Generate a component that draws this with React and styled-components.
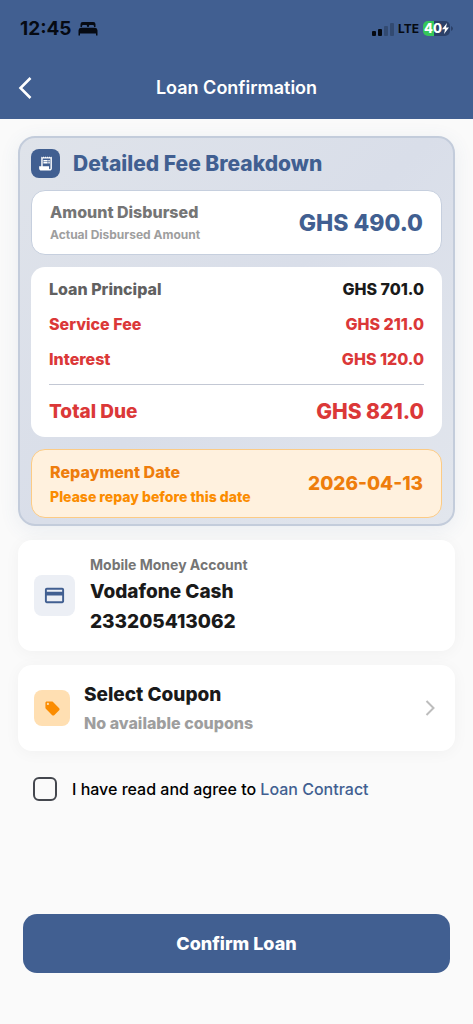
import React, { useState } from "react";
import styled, { createGlobalStyle } from "styled-components";
import { MdReceiptLong, MdCreditCard, MdLocalOffer } from "react-icons/md";

const GlobalStyle = createGlobalStyle`
  *, *::before, *::after { box-sizing: border-box; }
  body {
    margin: 0;
    background: #fafafa;
    font-family: Inter, "Liberation Sans", sans-serif;
    color: #1a1a1a;
  }
  h1, h2, p, dl, dt, dd { margin: 0; }
  button { font-family: inherit; cursor: pointer; }
  svg { display: block; flex: none; }
`;

const colors = {
  primary: "#415f91",
  red: "#db3838",
  orange: "#ee7d0c",
  amber: "#fb8c00",
  dark: "#1a1a1a",
  grey: "#757575",
};

const Page = styled.div`
  min-height: 100vh;
  display: flex;
  flex-direction: column;
`;

const TopBar = styled.header`
  background: ${colors.primary};
`;

const StatusBar = styled.div`
  display: flex;
  align-items: center;
  justify-content: space-between;
  height: 57px;
  padding: 0 20px;
  color: #060a12;
`;

const StatusGroup = styled.div`
  display: flex;
  align-items: center;
  gap: ${(p) => p.$gap}px;
`;

const Clock = styled.time`
  font-size: 19px;
  line-height: 20px;
  font-weight: 700;
`;

const Network = styled.span`
  font-size: 12px;
  line-height: 16px;
  font-weight: 700;
`;

const Battery = styled.span`
  display: flex;
  align-items: center;
  justify-content: center;
  width: 27px;
  height: 15px;
  border-radius: 5px;
  background: linear-gradient(90deg, #35c759 0 42%, #2b4068 42%);
  color: #fff;
  font-size: 13px;
  line-height: 15px;
  font-weight: 800;
`;

const NavBar = styled.nav`
  display: grid;
  grid-template-columns: 48px 1fr 48px;
  align-items: center;
  height: 62px;
`;

const BackButton = styled.button`
  display: flex;
  align-items: center;
  height: 48px;
  padding: 0 18px;
  border: 0;
  background: none;
  color: #fff;
`;

const Title = styled.h1`
  text-align: center;
  font-size: 18px;
  line-height: 24px;
  font-weight: 600;
  color: #fff;
`;

const Content = styled.main`
  flex: 1;
  display: flex;
  flex-direction: column;
  gap: 14px;
  padding: 17px 18px 24px;
`;

const FeePanel = styled.section`
  display: flex;
  flex-direction: column;
  gap: 12px;
  padding: 11px 11px 6px;
  border: 2px solid #c3ccdb;
  border-radius: 17px;
  background: linear-gradient(135deg, #dfe3ea, #d9dee9 50%, #e2e6ed);
  box-shadow: 0 4px 20px rgba(65, 95, 145, 0.09);
`;

const PanelHeading = styled.div`
  display: flex;
  align-items: center;
  gap: 13px;
`;

const PanelTitle = styled.h2`
  font-size: 21px;
  line-height: 24px;
  font-weight: 800;
  color: ${colors.primary};
`;

const IconTile = styled.span`
  display: flex;
  flex: none;
  align-items: center;
  justify-content: center;
  width: ${(p) => p.$size}px;
  height: ${(p) => p.$size}px;
  border-radius: 8px;
  background: ${(p) => p.$bg};
  color: ${(p) => p.$color};
`;

const SummaryCard = styled.div`
  display: flex;
  align-items: center;
  justify-content: space-between;
  padding: 11px 18px;
  border: 1px solid ${(p) => (p.$warm ? "#fccb85" : "#c6cfde")};
  border-radius: 14px;
  background: ${(p) => (p.$warm ? "#fff1de" : "#fff")};
`;

const TextStack = styled.div`
  display: flex;
  flex-direction: column;
  gap: ${(p) => p.$gap || 0}px;
`;

const Text = styled.p`
  font-size: ${(p) => p.$size}px;
  line-height: ${(p) => p.$line}px;
  font-weight: ${(p) => p.$weight || 800};
  color: ${(p) => p.$color || colors.dark};
`;

const FeeCard = styled.dl`
  display: flex;
  flex-direction: column;
  gap: 15px;
  padding: 12px 18px;
  border-radius: 14px;
  background: #fff;
`;

const FeeRow = styled.div`
  display: flex;
  align-items: center;
  justify-content: space-between;
  font-size: 16px;
  line-height: 20px;
  font-weight: 800;
  color: ${(p) => p.$color};
`;

const FeeValue = styled.dd`
  color: ${(p) => p.$color || "inherit"};
`;

const TotalRow = styled.div`
  display: flex;
  align-items: center;
  justify-content: space-between;
  padding-top: 14px;
  border-top: 1px solid #c3c8d4;
  font-size: 19px;
  line-height: 26px;
  font-weight: 800;
  color: ${colors.red};
`;

const TotalValue = styled.dd`
  font-size: 21px;
`;

const AccountCard = styled.section`
  display: flex;
  align-items: center;
  gap: 15px;
  padding: 15px 16px 16px;
  border-radius: 14px;
  background: #fff;
  box-shadow: 0 2px 16px rgba(0, 0, 0, 0.04);
`;

const CouponCard = styled.button`
  display: flex;
  align-items: center;
  gap: 14px;
  width: 100%;
  padding: 17px 20px 17px 16px;
  border: 0;
  border-radius: 14px;
  background: #fff;
  box-shadow: 0 2px 16px rgba(0, 0, 0, 0.04);
  text-align: left;
`;

const CouponText = styled.span`
  flex: 1;
  display: flex;
  flex-direction: column;
  gap: 4px;
`;

const Agreement = styled.div`
  display: flex;
  align-items: center;
  gap: 15px;
  padding: 12px 15px;
  font-size: 16px;
  line-height: 24px;
  font-weight: 500;
  color: #000;
`;

const Checkbox = styled.input`
  appearance: none;
  flex: none;
  width: 24px;
  height: 24px;
  margin: 0;
  border: 2px solid #44474e;
  border-radius: 6px;
  &:checked { background: ${colors.primary}; }
`;

const ContractLink = styled.a`
  color: ${colors.primary};
  text-decoration: none;
`;

const Footer = styled.footer`
  padding: 0 23px 51px;
`;

const ConfirmButton = styled.button`
  display: block;
  width: 100%;
  height: 59px;
  border: 0;
  border-radius: 14px;
  background: ${colors.primary};
  color: #fff;
  font-size: 18px;
  line-height: 24px;
  font-weight: 800;
`;

const BedIcon = () => (
  <svg width="20" height="14" viewBox="0 0 20 14" fill="currentColor" aria-hidden="true">
    <path d="M2.5 5V2.2Q2.500 0 4.700 0H15.300Q17.500 0 17.500 2.200V5H16V4.200Q16 3 14.800 3H12Q10.800 3 10.800 4.200V5H9.200V4.200Q9.200 3 8 3H5.200Q4 3 4 4.200V5Z" />
    <path d="M3 5.700H17Q19.500 6 19.500 8.500V13.500H18V11.500H2V13.500H.5V8.500Q.5 6 3 5.700Z" />
  </svg>
);

const SignalIcon = () => (
  <svg width="22" height="14" viewBox="0 0 22 14" fill="currentColor" aria-hidden="true">
    <rect x="0" y="9" width="4" height="5" rx="1" />
    <rect x="6" y="7" width="4" height="7" rx="1" />
    <rect x="12" y="4" width="4" height="10" rx="1" opacity=".25" />
    <rect x="18" y="1" width="4" height="13" rx="1" opacity=".25" />
  </svg>
);

const BoltIcon = () => (
  <svg width="7" height="11" viewBox="0 0 7 11" fill="currentColor" aria-hidden="true">
    <path d="M5 0L0 6.200H3L2 11L7 4.600H4Z" />
  </svg>
);

const BatteryCap = () => (
  <svg width="2" height="5" viewBox="0 0 2 5" fill="#2b4068" aria-hidden="true">
    <path d="M0 0Q2 1 2 2.500T0 5Z" />
  </svg>
);

const BackIcon = () => (
  <svg width="14" height="22" viewBox="0 0 14 22" fill="none" stroke="currentColor" strokeWidth="2.600" aria-hidden="true">
    <path d="M12.500 1L2.500 11L12.500 21" />
  </svg>
);

const ChevronIcon = () => (
  <svg width="10" height="16" viewBox="0 0 10 16" fill="none" stroke="#bdbdbd" strokeWidth="2" aria-hidden="true">
    <path d="M1.500 1L8.500 8L1.500 15" />
  </svg>
);

const fees = [
  { label: "Loan Principal", value: "GHS 701.0", color: "#616161", valueColor: colors.dark },
  { label: "Service Fee", value: "GHS 211.0", color: colors.red },
  { label: "Interest", value: "GHS 120.0", color: colors.red },
];

export default function App() {
  const [agreed, setAgreed] = useState(false);

  return (
    <>
      <GlobalStyle />
      <Page>
        <TopBar>
          <StatusBar>
            <StatusGroup $gap={6}>
              <Clock>12:45</Clock>
              <BedIcon />
            </StatusGroup>
            <StatusGroup $gap={4}>
              <SignalIcon />
              <Network>LTE</Network>
              <StatusGroup $gap={1}>
                <Battery>40<BoltIcon /></Battery>
                <BatteryCap />
              </StatusGroup>
            </StatusGroup>
          </StatusBar>
          <NavBar>
            <BackButton type="button" aria-label="Back"><BackIcon /></BackButton>
            <Title>Loan Confirmation</Title>
          </NavBar>
        </TopBar>

        <Content>
          <FeePanel>
            <PanelHeading>
              <IconTile $size={29} $bg={colors.primary} $color="#fff">
                <MdReceiptLong size={17} />
              </IconTile>
              <PanelTitle>Detailed Fee Breakdown</PanelTitle>
            </PanelHeading>

            <SummaryCard>
              <TextStack $gap={5}>
                <Text $size={16} $line={20} $color={colors.grey}>Amount Disbursed</Text>
                <Text $size={12} $line={16} $weight={700} $color="#9e9e9e">Actual Disbursed Amount</Text>
              </TextStack>
              <Text $size={23} $line={28} $color={colors.primary}>GHS 490.0</Text>
            </SummaryCard>

            <FeeCard>
              {fees.map((fee) => (
                <FeeRow key={fee.label} $color={fee.color}>
                  <dt>{fee.label}</dt>
                  <FeeValue $color={fee.valueColor}>{fee.value}</FeeValue>
                </FeeRow>
              ))}
              <TotalRow>
                <dt>Total Due</dt>
                <TotalValue>GHS 821.0</TotalValue>
              </TotalRow>
            </FeeCard>

            <SummaryCard $warm>
              <TextStack $gap={5}>
                <Text $size={16} $line={22} $color={colors.orange}>Repayment Date</Text>
                <Text $size={14} $line={18} $color={colors.amber}>Please repay before this date</Text>
              </TextStack>
              <Text $size={19} $line={24} $color={colors.orange}>2026-04-13</Text>
            </SummaryCard>
          </FeePanel>

          <AccountCard>
            <IconTile $size={41} $bg="#eceff5" $color={colors.primary}>
              <MdCreditCard size={23} />
            </IconTile>
            <TextStack $gap={4}>
              <Text $size={14} $line={20} $weight={700} $color={colors.grey}>Mobile Money Account</Text>
              <Text $size={19} $line={26}>Vodafone Cash</Text>
              <Text $size={19} $line={26}>233205413062</Text>
            </TextStack>
          </AccountCard>

          <CouponCard type="button">
            <IconTile $size={36} $bg="#ffdfb2" $color={colors.amber}>
              <MdLocalOffer size={17} />
            </IconTile>
            <CouponText>
              <Text as="span" $size={19} $line={26}>Select Coupon</Text>
              <Text as="span" $size={16} $line={22} $color="#9e9e9e">No available coupons</Text>
            </CouponText>
            <ChevronIcon />
          </CouponCard>

          <Agreement>
            <Checkbox
              id="agree"
              type="checkbox"
              checked={agreed}
              onChange={(e) => setAgreed(e.target.checked)}
            />
            <span>
              <label htmlFor="agree">I have read and agree to </label>
              <ContractLink href="#contract">Loan Contract</ContractLink>
            </span>
          </Agreement>
        </Content>

        <Footer>
          <ConfirmButton type="button">Confirm Loan</ConfirmButton>
        </Footer>
      </Page>
    </>
  );
}
